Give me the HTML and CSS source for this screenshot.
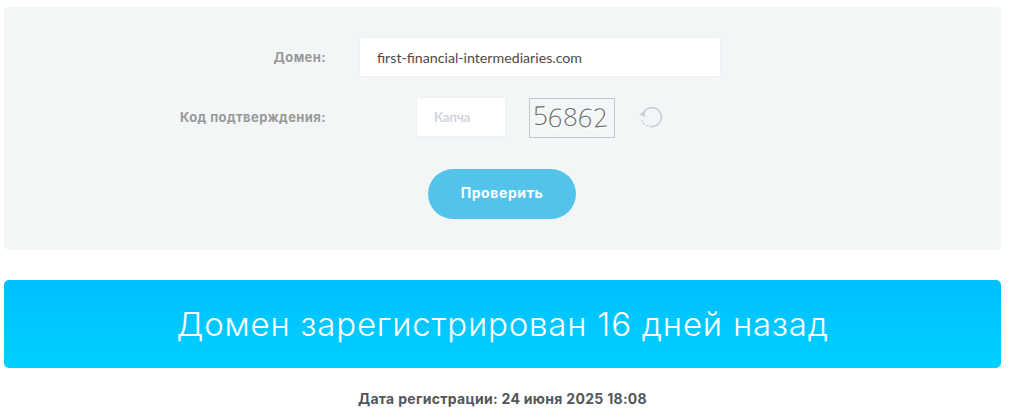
FILE: index.html
```html
<!DOCTYPE html>
<html lang="ru">
<head>
    <meta charset="UTF-8">
    <title>Проверка домена</title>
    <link rel="stylesheet" href="styles.css">
</head>
<body>
    <form class="check-form">
        <div class="form-row">
            <label class="form-label">Домен:</label>
            <div class="field domain-field">first-financial-intermediaries.com</div>
        </div>
        <div class="form-row captcha-row">
            <label class="form-label">Код подтверждения:</label>
            <div class="field captcha-field">Капча</div>
            <svg class="captcha-image" width="86" height="40" viewBox="0 0 86 40">
                <rect x="0.5" y="0.5" width="85" height="39" fill="#f3f6f7" stroke="#c4c7c9"/>
                <g class="captcha-halo">
                    <text x="5" y="28" transform="rotate(-3 11 20)">5</text>
                    <text x="20" y="30" transform="rotate(6 26 20)">6</text>
                    <text x="35" y="29">8</text>
                    <text x="50" y="30" transform="rotate(8 56 20)">6</text>
                    <text x="65" y="30" transform="rotate(-4 71 20)">2</text>
                </g>
                <g class="captcha-digits">
                    <text x="4" y="27" transform="rotate(-3 11 20)">5</text>
                    <text x="19" y="29" transform="rotate(6 26 20)">6</text>
                    <text x="34" y="28">8</text>
                    <text x="49" y="29" transform="rotate(8 56 20)">6</text>
                    <text x="64" y="29" transform="rotate(-4 71 20)">2</text>
                </g>
            </svg>
            <svg class="refresh-icon" width="24" height="24" viewBox="0 0 24 24" fill="none">
                <path d="M5.2 8.2A9.5 9.5 0 1 1 12.5 21.5" stroke="#c9cdd0" stroke-width="1.6"/>
                <path d="M12.5 21.5A9.5 9.5 0 0 1 3.4 14.5" stroke="#c9cdd0" stroke-width="1.6" stroke-dasharray="1.5 1.8"/>
                <path d="M1.5 9.5L7.5 12L6 6Z" fill="#c9cdd0"/>
            </svg>
        </div>
        <button class="submit-button" type="button">Проверить</button>
    </form>

    <div class="result-banner">Домен зарегистрирован 16 дней назад</div>
    <p class="result-date">Дата регистрации: 24 июня 2025 18:08</p>
</body>
</html>
```

FILE: styles.css
```css
html, body {
    height: 418px;
    overflow: hidden;
}
body {
    margin: 0;
    padding: 7px 13px 0 4px;
    background-color: #fff;
    font-family: Inter, sans-serif;
    color: #54565a;
}
.check-form {
    height: 243px;
    padding-top: 30px;
    box-sizing: border-box;
    background-color: #f3f6f7;
    border-radius: 5px;
    display: flex;
    flex-direction: column;
}
.form-row {
    display: flex;
    align-items: center;
    height: 40px;
}
.captcha-row {
    margin-top: 20px;
}
.form-label {
    width: 322px;
    text-align: right;
    font-size: 13px;
    font-weight: 700;
    letter-spacing: 0.4px;
    color: #999;
}
.field {
    height: 40px;
    box-sizing: border-box;
    background-color: #fff;
    border: 1px solid #eef1f3;
    border-radius: 2px;
    display: flex;
    align-items: center;
    padding-left: 17px;
    font-family: Lato, sans-serif;
    font-size: 14.2px;
    color: #4a4a4a;
}
.domain-field {
    width: 362px;
    margin-left: 33px;
}
.captcha-field {
    width: 90px;
    margin-left: 90px;
    font-weight: bold;
    font-size: 13px;
    color: #cfd4dc;
}
.captcha-image {
    margin: 2px 0 0 23px;
}
.captcha-digits text,
.captcha-halo text {
    font-family: "Open Sans", sans-serif;
    font-weight: 300;
    font-size: 26px;
}
.captcha-digits text {
    fill: #6d7072;
}
.captcha-halo text {
    fill: #fff;
    stroke: #fff;
    stroke-width: 1px;
}
.refresh-icon {
    margin: 0 0 0 23px;
}
.submit-button {
    align-self: flex-start;
    width: 148px;
    height: 50px;
    margin: 32px 0 0 424px;
    padding: 0 0 3px;
    border: none;
    border-radius: 25px;
    background-color: #54c3ec;
    color: #fff;
    font-family: Inter, sans-serif;
    font-size: 14px;
    font-weight: 700;
    letter-spacing: 0.6px;
}
.result-banner {
    height: 88px;
    margin-top: 30px;
    border-radius: 5px;
    background: linear-gradient(180deg, #00bfff, #00d0ff);
    color: #fff;
    font-size: 33px;
    font-weight: 300;
    letter-spacing: 0.8px;
    display: flex;
    align-items: center;
    justify-content: center;
}
.result-date {
    margin: 22px 0 0;
    text-align: center;
    font-size: 14px;
    font-weight: 700;
    letter-spacing: 0.3px;
    color: #54565a;
}
```
